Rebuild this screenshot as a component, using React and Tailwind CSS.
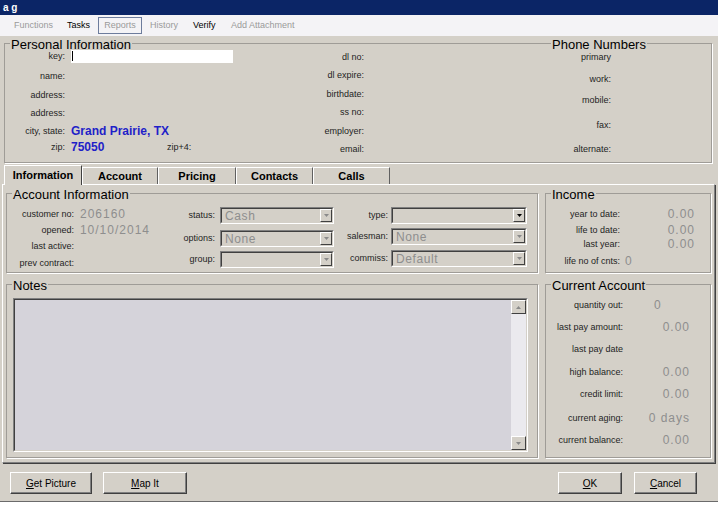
import React from "react";

const lbl = "text-[9px] leading-none text-[#1e1e1e] whitespace-nowrap";
const val = "text-[12px] leading-none text-[#8e8e8e] tracking-[1px] whitespace-nowrap";

function Group({ title, className = "", children }) {
  return (
    <fieldset className={`border border-[#9f9c97] shadow-[1px_1px_0_#ffffff] min-w-0 ${className}`}>
      <legend className="ml-[5px] px-[1px] text-[13px] leading-[12px] text-black">
        <span className="relative top-[2px]">{title}</span>
      </legend>
      {children}
    </fieldset>
  );
}

function Arrow({ dark, up }) {
  return (
    <svg width="5" height="3" viewBox="0 0 5 3" className={up ? "rotate-180" : ""}>
      <path d="M0 0H5L2.5 3Z" fill={dark ? "#000" : "#8a8a8a"} />
    </svg>
  );
}

function Combo({ value, w, dark }) {
  return (
    <div className={`flex h-[17px] border border-t-[#808080] border-l-[#808080] border-b-white border-r-white ${w}`}>
      <div className="flex flex-1 items-center border border-t-[#404040] border-l-[#404040] border-b-[#d4d0c8] border-r-[#d4d0c8]">
        <span className="flex-1 pl-[3px] text-[12px] leading-none text-[#8e8e8e] tracking-[0.6px]">{value}</span>
        <span className="flex h-[13px] w-[12px] items-center justify-center border border-t-white border-l-white border-b-[#404040] border-r-[#404040] bg-[#d4d0c8]">
          <Arrow dark={dark} />
        </span>
      </div>
    </div>
  );
}

function Btn({ children, w, className = "" }) {
  return (
    <div className={`flex h-[22px] items-center justify-center border border-t-white border-l-white border-b-[#404040] border-r-[#404040] shadow-[inset_-1px_-1px_0_#808080] text-[10px] text-black ${w} ${className}`}>
      {children}
    </div>
  );
}

function Row({ label, lw, h = "h-[16px]", mt, children, gap = "ml-[6px]" }) {
  return (
    <div className={`flex items-center ${h} ${mt}`}>
      <span className={`${lbl} ${lw} text-right`}>{label}</span>
      {children !== undefined && <div className={`flex items-center ${gap}`}>{children}</div>}
    </div>
  );
}

export default function App() {
  return (
    <div className="w-[718px] h-[505px] bg-white overflow-hidden font-['Liberation_Sans',Arial,sans-serif]">
      <div className="flex h-[502px] flex-col border-b border-[#6b6b6b] bg-[#d4d0c8]">
        {/* title bar */}
        <div className="flex h-[15px] items-center bg-[#0b2566] pl-[3px] text-[10px] font-bold text-white">a g</div>
        {/* menu */}
        <div className="flex h-[21px] items-center bg-[#f4f3f6] text-[9px]">
          <span className="ml-[14px] w-[53px] text-[#9a9a9a]">Functions</span>
          <span className="w-[31px] text-black">Tasks</span>
          <span className="flex h-[17px] w-[44px] items-center justify-center border border-[#6d7c9c] text-[#9a9a9a]">Reports</span>
          <span className="ml-[8px] w-[43px] text-[#9a9a9a]">History</span>
          <span className="w-[38px] text-black">Verify</span>
          <span className="text-[#9a9a9a]">Add Attachment</span>
        </div>

        {/* personal information */}
        <Group title="Personal Information" className="ml-[4px] mt-[1px] h-[126px] w-[708px]">
          <div className="flex">
            <div className="flex w-[275px] flex-col">
              <Row label="key:" lw="w-[60px]" mt="mt-[-1px]">
                <div className="flex h-[13px] w-[162px] items-center bg-white">
                  <div className="ml-[1px] h-[10px] w-[1px] bg-black" />
                </div>
              </Row>
              <Row label="name:" lw="w-[60px]" mt="mt-[4px]" />
              <Row label="address:" lw="w-[60px]" mt="mt-[3px]" />
              <Row label="address:" lw="w-[60px]" mt="mt-[2px]" />
              <Row label="city, state:" lw="w-[60px]" mt="mt-[2px]">
                <span className="text-[12px] font-bold leading-none text-[#1f1fc8]">Grand Prairie, TX</span>
              </Row>
              <Row label="zip:" lw="w-[60px]" mt="mt-0">
                <span className="w-[96px] text-[12px] font-bold leading-none text-[#1f1fc8]">75050</span>
                <span className={lbl}>zip+4:</span>
              </Row>
            </div>
            <div className="flex w-[260px] flex-col">
              <Row label="dl no:" lw="w-[84px]" mt="mt-0" />
              <Row label="dl expire:" lw="w-[84px]" mt="mt-[2px]" />
              <Row label="birthdate:" lw="w-[84px]" mt="mt-[3px]" />
              <Row label="ss no:" lw="w-[84px]" mt="mt-[2px]" />
              <Row label="employer:" lw="w-[84px]" mt="mt-[3px]" />
              <Row label="email:" lw="w-[84px]" mt="mt-[2px]" />
            </div>
            <div className="relative flex flex-1 flex-col">
              <span className="absolute left-[11px] top-[-10px] bg-[#d4d0c8] px-[1px] text-[13px] leading-[12px] text-black">Phone Numbers</span>
              <Row label="primary" lw="w-[71px]" mt="mt-0" />
              <Row label="work:" lw="w-[71px]" mt="mt-[6px]" />
              <Row label="mobile:" lw="w-[71px]" mt="mt-[5px]" />
              <Row label="fax:" lw="w-[71px]" mt="mt-[9px]" />
              <Row label="alternate:" lw="w-[71px]" mt="mt-[8px]" />
            </div>
          </div>
        </Group>

        {/* tabs */}
        <div className="ml-[4px] mt-[2px] flex items-end text-[11px] font-bold text-black">
          <div className="relative z-10 mb-[-1px] flex h-[20px] w-[78px] items-center justify-center border-l border-t border-r border-l-white border-t-white border-r-[#404040] bg-[#d4d0c8]">Information</div>
          <div className="flex h-[17px] w-[76px] items-center justify-center border-l border-t border-r border-l-white border-t-white border-r-[#606060] pt-[1px]">Account</div>
          <div className="flex h-[17px] w-[78px] items-center justify-center border-l border-t border-r border-l-white border-t-white border-r-[#606060] pt-[1px]">Pricing</div>
          <div className="flex h-[17px] w-[77px] items-center justify-center border-l border-t border-r border-l-white border-t-white border-r-[#606060] pt-[1px]">Contacts</div>
          <div className="flex h-[17px] w-[77px] items-center justify-center border-l border-t border-r border-l-white border-t-white border-r-[#606060] pt-[1px]">Calls</div>
        </div>

        {/* tab panel */}
        <div className="ml-[2px] flex h-[279px] w-[713px] flex-col border border-t-white border-l-white border-b-[#808080] border-r-[#808080] pl-[3px] shadow-[1px_1px_0_#404040]">
          <div className="mt-[2px] flex gap-[7px]">
            <Group title="Account Information" className="h-[86px] w-[532px]">
              <div className="flex">
                <div className="flex w-[143px] flex-col">
                  <Row label="customer no:" lw="w-[67px]" mt="mt-[7px]">
                    <span className={val}>206160</span>
                  </Row>
                  <Row label="opened:" lw="w-[67px]" mt="mt-0">
                    <span className={val}>10/10/2014</span>
                  </Row>
                  <Row label="last active:" lw="w-[67px]" mt="mt-0" />
                  <Row label="prev contract:" lw="w-[67px]" mt="mt-[1px]" />
                </div>
                <div className="flex w-[184px] flex-col">
                  <Row label="status:" lw="w-[65px]" h="h-[17px]" mt="mt-[8px]" gap="ml-[5px]">
                    <Combo value="Cash" w="w-[114px]" />
                  </Row>
                  <Row label="options:" lw="w-[65px]" h="h-[17px]" mt="mt-[6px]" gap="ml-[5px]">
                    <Combo value="None" w="w-[114px]" />
                  </Row>
                  <Row label="group:" lw="w-[65px]" h="h-[17px]" mt="mt-[4px]" gap="ml-[5px]">
                    <Combo value="" w="w-[114px]" />
                  </Row>
                </div>
                <div className="flex flex-col">
                  <Row label="type:" lw="w-[54px]" h="h-[17px]" mt="mt-[8px]" gap="ml-[3px]">
                    <Combo value="" w="w-[136px]" dark />
                  </Row>
                  <Row label="salesman:" lw="w-[54px]" h="h-[17px]" mt="mt-[4px]" gap="ml-[3px]">
                    <Combo value="None" w="w-[136px]" />
                  </Row>
                  <Row label="commiss:" lw="w-[54px]" h="h-[17px]" mt="mt-[5px]" gap="ml-[3px]">
                    <Combo value="Default" w="w-[136px]" />
                  </Row>
                </div>
              </div>
            </Group>
            <Group title="Income" className="h-[86px] w-[166px]">
              <div className="flex flex-col">
                {[
                  ["year to date:", "0.00", "mt-[8px]"],
                  ["life to date:", "0.00", "mt-[2px]"],
                  ["last year:", "0.00", "mt-0"],
                ].map(([l, v, m]) => (
                  <div key={l} className={`flex h-[14px] items-center ${m}`}>
                    <span className={`${lbl} w-[74px] text-right`}>{l}</span>
                    <span className={`${val} w-[75px] text-right`}>{v}</span>
                  </div>
                ))}
                <div className="mt-[3px] flex h-[14px] items-center">
                  <span className={`${lbl} w-[74px] text-right`}>life no of cnts:</span>
                  <span className={`${val} ml-[5px]`}>0</span>
                </div>
              </div>
            </Group>
          </div>

          <div className="mt-[5px] flex gap-[7px]">
            <Group title="Notes" className="h-[180px] w-[532px]">
              <div className="ml-[6px] mt-[8px] flex h-[154px] w-[515px] border border-t-[#808080] border-l-[#808080] border-b-white border-r-white">
                <div className="flex flex-1 border border-t-[#404040] border-l-[#404040] border-b-[#d4d0c8] border-r-[#d4d0c8] bg-[#d5d3da]">
                  <div className="flex-1" />
                  <div className="flex w-[15px] flex-col bg-[#ebeaee]">
                    <div className="flex h-[14px] items-center justify-center border border-t-white border-l-white border-b-[#404040] border-r-[#404040] bg-[#d4d0c8]">
                      <Arrow up />
                    </div>
                    <div className="flex-1" />
                    <div className="flex h-[14px] items-center justify-center border border-t-white border-l-white border-b-[#404040] border-r-[#404040] bg-[#d4d0c8]">
                      <Arrow />
                    </div>
                  </div>
                </div>
              </div>
            </Group>
            <Group title="Current Account" className="h-[180px] w-[166px]">
              <div className="flex flex-col">
                {[
                  ["quantity out:", "0", "mt-[8px]", "left"],
                  ["last pay amount:", "0.00", "mt-[8px]"],
                  ["last pay date", "", "mt-[8px]"],
                  ["high balance:", "0.00", "mt-[9px]"],
                  ["credit limit:", "0.00", "mt-[8px]"],
                  ["current aging:", "0 days", "mt-[10px]"],
                  ["current balance:", "0.00", "mt-[8px]"],
                ].map(([l, v, m, a]) => (
                  <div key={l} className={`flex h-[14px] items-center ${m}`}>
                    <span className={`${lbl} w-[77px] text-right`}>{l}</span>
                    <span className={`${val} w-[67px] ${a === "left" ? "pl-[31px] text-left" : "text-right"}`}>{v}</span>
                  </div>
                ))}
              </div>
            </Group>
          </div>
        </div>

        {/* buttons */}
        <div className="mt-[9px] flex">
          <Btn w="w-[82px]" className="ml-[10px]"><span><u>G</u>et Picture</span></Btn>
          <Btn w="w-[84px]" className="ml-[11px]"><span><u>M</u>ap It</span></Btn>
          <div className="flex-1" />
          <Btn w="w-[64px]"><span><u>O</u>K</span></Btn>
          <Btn w="w-[63px]" className="ml-[12px] mr-[21px]"><span><u>C</u>ancel</span></Btn>
        </div>
      </div>
    </div>
  );
}
